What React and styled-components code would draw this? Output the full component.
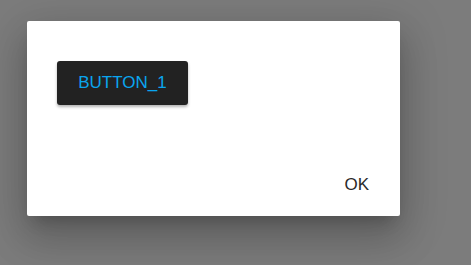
import React from "react";
import styled, { createGlobalStyle } from "styled-components";

const GlobalStyle = createGlobalStyle`
  html, body {
    margin: 0;
    padding: 0;
    width: 471px;
    height: 265px;
    overflow: hidden;
    font-family: "Liberation Sans", Arial, sans-serif;
  }
`;

const Backdrop = styled.div`
  width: 471px;
  height: 265px;
  background: #7c7c7c;
  padding: 21px 0 0 27px;
  box-sizing: border-box;
`;

const Dialog = styled.div`
  width: 373px;
  height: 195px;
  background: #ffffff;
  border-radius: 2px;
  box-shadow: 0 11px 15px -7px rgba(0, 0, 0, 0.2),
    0 24px 38px 3px rgba(0, 0, 0, 0.14), 0 9px 46px 8px rgba(0, 0, 0, 0.12);
  display: flex;
  flex-direction: column;
  box-sizing: border-box;
`;

const Content = styled.div`
  flex: 1;
  padding: 40px 30px 0;
`;

const DarkButton = styled.button`
  width: 131px;
  height: 44px;
  border: none;
  border-radius: 3px;
  background: #222222;
  color: #0aa5ef;
  font-family: "Liberation Sans", Arial, sans-serif;
  font-size: 17px;
  text-transform: uppercase;
  box-shadow: 0 2px 3px rgba(0, 0, 0, 0.3);
  cursor: pointer;
`;

const Actions = styled.div`
  display: flex;
  justify-content: flex-end;
  padding: 0 23px 13px;
`;

const TextButton = styled.button`
  height: 36px;
  padding: 0 8px;
  border: none;
  background: transparent;
  color: #2a2a2a;
  font-family: "Liberation Sans", Arial, sans-serif;
  font-size: 17px;
  cursor: pointer;
`;

export default function App() {
  return (
    <>
      <GlobalStyle />
      <Backdrop>
        <Dialog>
          <Content>
            <DarkButton>Button_1</DarkButton>
          </Content>
          <Actions>
            <TextButton>OK</TextButton>
          </Actions>
        </Dialog>
      </Backdrop>
    </>
  );
}
